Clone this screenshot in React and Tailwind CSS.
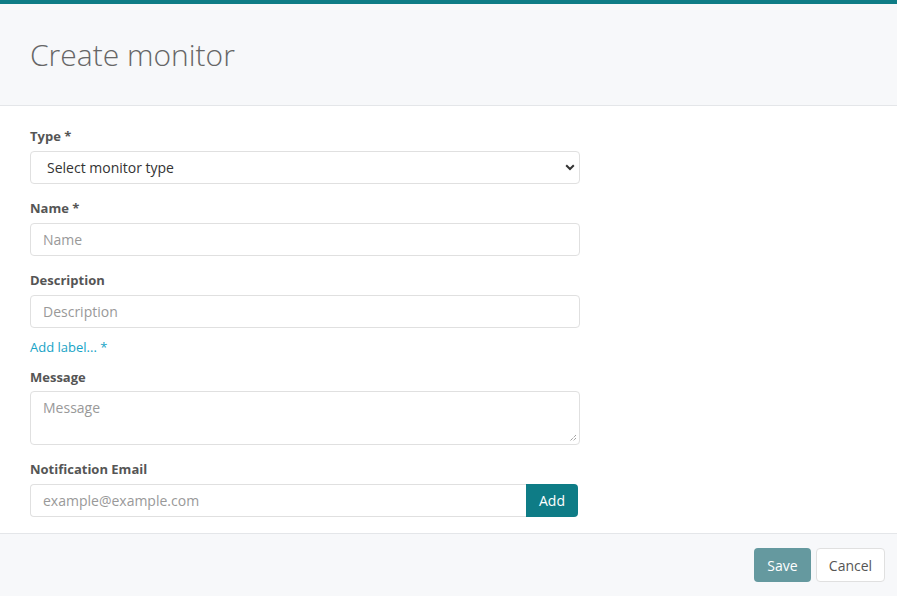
import React from "react";

const font = { fontFamily: '"Open Sans", "Noto Sans", sans-serif' };

function Label({ children }) {
  return (
    <label className="block h-4 text-[13px] font-bold leading-4 text-[#555]">{children}</label>
  );
}

export default function App() {
  return (
    <div className="flex h-[596px] w-[897px] flex-col bg-white" style={font}>
      <div className="h-1 bg-[#0e7c86]" />
      <div className="flex h-[102px] items-center border-b border-[#e4e6e9] bg-[#f7f8fa] px-[30px]">
        <h1 className="text-[30px] font-light leading-none text-[#666]">Create monitor</h1>
      </div>
      <div className="flex-1 px-[30px] pt-[22px]">
        <div className="w-[550px]">
          <Label>Type *</Label>
          <div className="relative mt-[7px] h-[33px] w-[550px]">
            <div className="flex h-full items-center rounded border border-[#e0e0e0] bg-white pl-4 text-[14px] text-[#333]">
              Select monitor type
            </div>
            <svg className="absolute right-[5px] top-[13px]" width="10" height="7" viewBox="0 0 10 7">
              <path d="M1.2 1.3 L5 5 L8.8 1.3" fill="none" stroke="#333" strokeWidth="2" />
            </svg>
          </div>

          <div className="mt-4">
            <Label>Name *</Label>
          </div>
          <div className="mt-[7px] flex h-[33px] items-center rounded border border-[#e0e0e0] pl-3 text-[14px] text-[#999]">
            Name
          </div>

          <div className="mt-4">
            <Label>Description</Label>
          </div>
          <div className="mt-[7px] flex h-[33px] items-center rounded border border-[#e0e0e0] pl-3 text-[14px] text-[#999]">
            Description
          </div>

          <div className="mt-[11px] h-4 text-[13px] leading-4 text-[#17a3c6]">Add label... *</div>

          <div className="mt-[14px]">
            <Label>Message</Label>
          </div>
          <div className="relative mt-[6px] h-[54px] rounded border border-[#e0e0e0] pl-3 pt-[6px] text-[14px] leading-5 text-[#999]">
            Message
            <svg className="absolute bottom-[2px] right-[2px]" width="8" height="8" viewBox="0 0 8 8">
              <path d="M7 1 L1 7 M7 4 L4 7" stroke="#777" strokeWidth="1" strokeDasharray="1 1" />
            </svg>
          </div>

          <div className="mt-4">
            <Label>Notification Email</Label>
          </div>
          <div className="mt-[7px] flex h-[33px] w-[548px]">
            <div className="flex flex-1 items-center rounded-l border border-r-0 border-[#e0e0e0] pl-3 text-[14px] text-[#999]">
              example@example.com
            </div>
            <button className="h-full w-[52px] rounded-r bg-[#0e7c86] text-[14px] text-white">Add</button>
          </div>
        </div>
      </div>
      <div className="flex h-[63px] items-center justify-end gap-[5px] border-t border-[#e4e6e9] bg-[#f7f8fa] pr-3">
        <button className="h-[34px] w-[57px] rounded bg-[#65999f] text-[14px] text-white">Save</button>
        <button className="h-[34px] w-[69px] rounded border border-[#e0e0e0] bg-white text-[14px] text-[#555]">Cancel</button>
      </div>
    </div>
  );
}
